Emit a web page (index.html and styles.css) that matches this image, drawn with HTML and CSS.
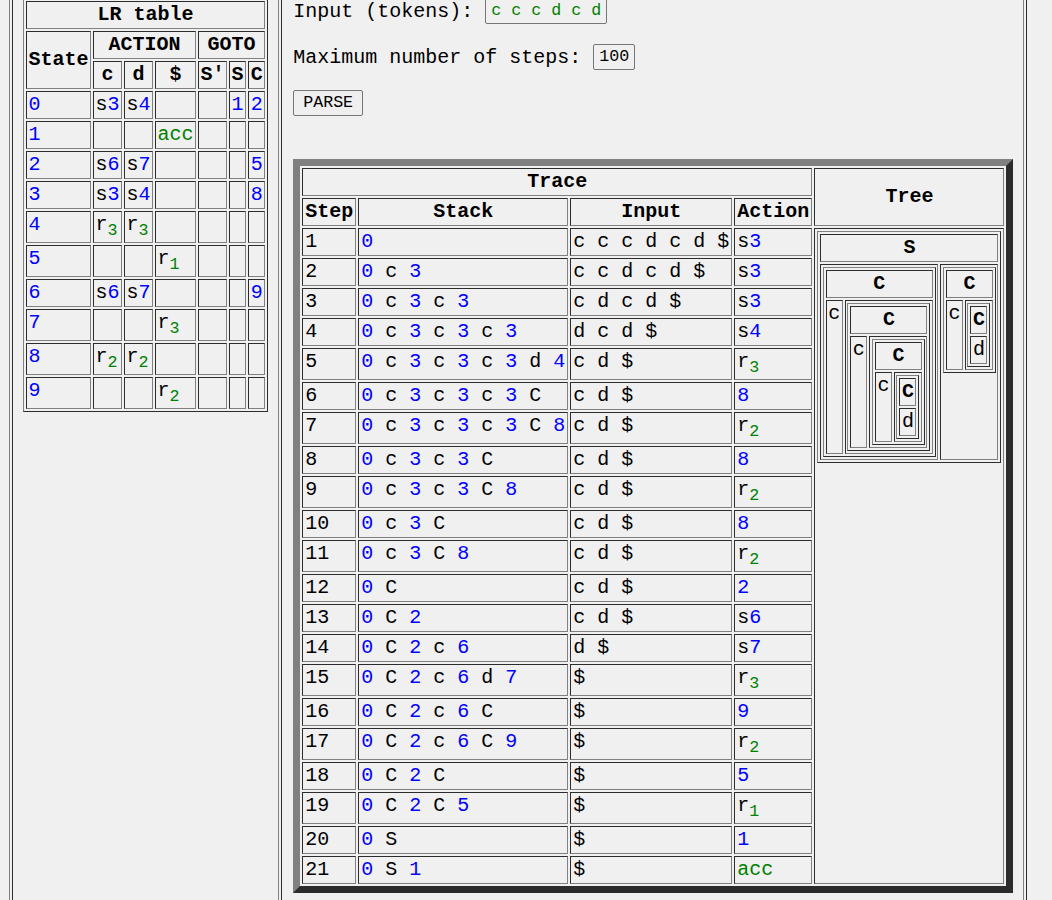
FILE: index.html
```html
<!DOCTYPE html>
<html>
<head>
<meta charset="utf-8">
<title>LR parser</title>
<link rel="stylesheet" href="styles.css">
</head>
<body>
<table class="layout">
<tr>
<td class="side">
<table class="grid lr">
<tr><th colspan="7">LR table</th></tr>
<tr><th rowspan="2">State</th><th colspan="3">ACTION</th><th colspan="3">GOTO</th></tr>
<tr><th>c</th><th>d</th><th>$</th><th>S'</th><th>S</th><th>C</th></tr>
<tr><td class="n">0</td><td>s<span class="n">3</span></td><td>s<span class="n">4</span></td><td></td><td></td><td class="n">1</td><td class="n">2</td></tr>
<tr><td class="n">1</td><td></td><td></td><td class="g">acc</td><td></td><td></td><td></td></tr>
<tr><td class="n">2</td><td>s<span class="n">6</span></td><td>s<span class="n">7</span></td><td></td><td></td><td></td><td class="n">5</td></tr>
<tr><td class="n">3</td><td>s<span class="n">3</span></td><td>s<span class="n">4</span></td><td></td><td></td><td></td><td class="n">8</td></tr>
<tr><td class="n">4</td><td>r<sub>3</sub></td><td>r<sub>3</sub></td><td></td><td></td><td></td><td></td></tr>
<tr><td class="n">5</td><td></td><td></td><td>r<sub>1</sub></td><td></td><td></td><td></td></tr>
<tr><td class="n">6</td><td>s<span class="n">6</span></td><td>s<span class="n">7</span></td><td></td><td></td><td></td><td class="n">9</td></tr>
<tr><td class="n">7</td><td></td><td></td><td>r<sub>3</sub></td><td></td><td></td><td></td></tr>
<tr><td class="n">8</td><td>r<sub>2</sub></td><td>r<sub>2</sub></td><td></td><td></td><td></td><td></td></tr>
<tr><td class="n">9</td><td></td><td></td><td>r<sub>2</sub></td><td></td><td></td><td></td></tr>
</table>
</td>
<td class="main">
<div class="form">
<div class="row">Input (tokens): <span class="field tokens">c c c d c d</span></div>
<div class="row">Maximum number of steps: <span class="field">100</span></div>
<div class="row"><button class="btn" type="button">PARSE</button></div>
</div>
<table class="grid trace">
<tr><th colspan="4">Trace</th><th rowspan="2">Tree</th></tr>
<tr><th>Step</th><th>Stack</th><th>Input</th><th>Action</th></tr>
<tr><td>1</td><td><span class="n">0</span></td><td>c c c d c d $</td><td>s<span class="n">3</span></td>
<td class="tree" rowspan="21">
<table class="grid node">
<tr><th colspan="2">S</th></tr>
<tr>
<td class="sub">
<table class="grid node">
<tr><th colspan="2">C</th></tr>
<tr><td>c</td><td class="sub">
<table class="grid node">
<tr><th colspan="2">C</th></tr>
<tr><td>c</td><td class="sub">
<table class="grid node">
<tr><th colspan="2">C</th></tr>
<tr><td>c</td><td class="sub">
<table class="grid node">
<tr><th>C</th></tr>
<tr><td>d</td></tr>
</table>
</td></tr>
</table>
</td></tr>
</table>
</td></tr>
</table>
</td>
<td class="sub">
<table class="grid node">
<tr><th colspan="2">C</th></tr>
<tr><td>c</td><td class="sub">
<table class="grid node">
<tr><th>C</th></tr>
<tr><td>d</td></tr>
</table>
</td></tr>
</table>
</td>
</tr>
</table>
</td>
</tr>
<tr><td>2</td><td><span class="n">0</span> c <span class="n">3</span></td><td>c c d c d $</td><td>s<span class="n">3</span></td></tr>
<tr><td>3</td><td><span class="n">0</span> c <span class="n">3</span> c <span class="n">3</span></td><td>c d c d $</td><td>s<span class="n">3</span></td></tr>
<tr><td>4</td><td><span class="n">0</span> c <span class="n">3</span> c <span class="n">3</span> c <span class="n">3</span></td><td>d c d $</td><td>s<span class="n">4</span></td></tr>
<tr><td>5</td><td><span class="n">0</span> c <span class="n">3</span> c <span class="n">3</span> c <span class="n">3</span> d <span class="n">4</span></td><td>c d $</td><td>r<sub>3</sub></td></tr>
<tr><td>6</td><td><span class="n">0</span> c <span class="n">3</span> c <span class="n">3</span> c <span class="n">3</span> C</td><td>c d $</td><td class="n">8</td></tr>
<tr><td>7</td><td><span class="n">0</span> c <span class="n">3</span> c <span class="n">3</span> c <span class="n">3</span> C <span class="n">8</span></td><td>c d $</td><td>r<sub>2</sub></td></tr>
<tr><td>8</td><td><span class="n">0</span> c <span class="n">3</span> c <span class="n">3</span> C</td><td>c d $</td><td class="n">8</td></tr>
<tr><td>9</td><td><span class="n">0</span> c <span class="n">3</span> c <span class="n">3</span> C <span class="n">8</span></td><td>c d $</td><td>r<sub>2</sub></td></tr>
<tr><td>10</td><td><span class="n">0</span> c <span class="n">3</span> C</td><td>c d $</td><td class="n">8</td></tr>
<tr><td>11</td><td><span class="n">0</span> c <span class="n">3</span> C <span class="n">8</span></td><td>c d $</td><td>r<sub>2</sub></td></tr>
<tr><td>12</td><td><span class="n">0</span> C</td><td>c d $</td><td class="n">2</td></tr>
<tr><td>13</td><td><span class="n">0</span> C <span class="n">2</span></td><td>c d $</td><td>s<span class="n">6</span></td></tr>
<tr><td>14</td><td><span class="n">0</span> C <span class="n">2</span> c <span class="n">6</span></td><td>d $</td><td>s<span class="n">7</span></td></tr>
<tr><td>15</td><td><span class="n">0</span> C <span class="n">2</span> c <span class="n">6</span> d <span class="n">7</span></td><td>$</td><td>r<sub>3</sub></td></tr>
<tr><td>16</td><td><span class="n">0</span> C <span class="n">2</span> c <span class="n">6</span> C</td><td>$</td><td class="n">9</td></tr>
<tr><td>17</td><td><span class="n">0</span> C <span class="n">2</span> c <span class="n">6</span> C <span class="n">9</span></td><td>$</td><td>r<sub>2</sub></td></tr>
<tr><td>18</td><td><span class="n">0</span> C <span class="n">2</span> C</td><td>$</td><td class="n">5</td></tr>
<tr><td>19</td><td><span class="n">0</span> C <span class="n">2</span> C <span class="n">5</span></td><td>$</td><td>r<sub>1</sub></td></tr>
<tr><td>20</td><td><span class="n">0</span> S</td><td>$</td><td class="n">1</td></tr>
<tr><td>21</td><td><span class="n">0</span> S <span class="n">1</span></td><td>$</td><td class="g">acc</td></tr>
</table>
</td>
</tr>
</table>
</body>
</html>
```

FILE: styles.css
```css
html {
  overflow: hidden;
  background: #f0f0f0;
}

body {
  margin: 0 0 0 9px;
  background: #f0f0f0;
  color: #000;
  font-family: "Liberation Mono", "Courier New", monospace;
  font-size: 20px;
}

.layout {
  margin-top: -16px;
  width: 1018px;
  border: 1px outset grey;
  border-spacing: 2px;
}

.layout > tbody > tr > td {
  border: 1px inset grey;
  padding: 10px;
  vertical-align: top;
}

.layout > tbody > tr > td.side {
  width: 1px;
  padding: 10px 10px 10px 10px;
}

.layout > tbody > tr > td.main {
  padding: 10px 10px 10px 11px;
}

.grid {
  border: 1px outset grey;
  border-spacing: 2px;
}

.grid th,
.grid td {
  border: 1px inset grey;
  padding: 2px;
  line-height: 22px;
  white-space: nowrap;
}

.grid th {
  font-weight: bold;
  text-align: center;
  vertical-align: middle;
}

.grid td {
  text-align: left;
  vertical-align: top;
}

.lr th,
.lr td {
  padding: 2px 1.5px;
}

.node th,
.node td {
  padding: 2px 1.5px;
}

.node td.sub {
  padding: 2px 1.5px;
}

sub {
  font-size: smaller;
  line-height: normal;
  color: #008000;
}

.n {
  color: #0000ff;
}

.g {
  color: #008000;
}

.form {
  display: flex;
  flex-direction: column;
  gap: 20px;
}

.row {
  display: flex;
  align-items: center;
  height: 26px;
  white-space: pre;
}

.field {
  display: inline-block;
  border: 1px solid #767676;
  border-radius: 2px;
  padding: 2px 5px;
  font-size: 16.67px;
  line-height: 20px;
  color: #000;
}

.field.tokens {
  color: #008000;
}

.btn {
  font-family: "Liberation Mono", "Courier New", monospace;
  font-size: 16.67px;
  line-height: 20px;
  color: #000;
  background: #efefef;
  border: 1px solid #767676;
  border-radius: 2px;
  padding: 2px 9px;
  margin: 0;
}

.trace {
  margin-top: 43px;
  border-width: 7px;
}

.trace td.tree {
  padding: 2px;
}
```
